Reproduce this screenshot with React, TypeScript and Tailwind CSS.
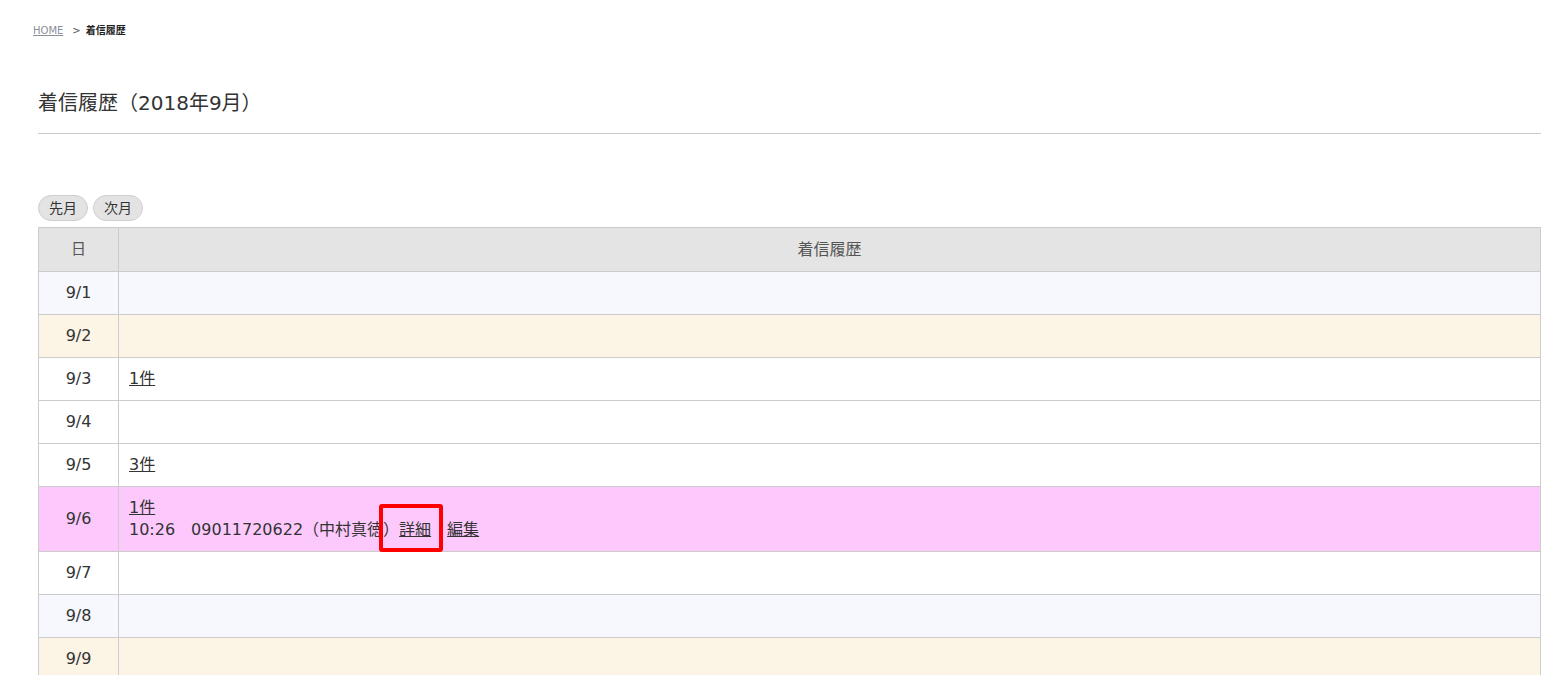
import React from "react";

type Row = {
  day: string;
  bg: string;
  content?: React.ReactNode;
};

const Detail: React.FC = () => (
  <span className="relative inline-block">
    <a href="#" className="underline">詳細</a>
    <span className="pointer-events-none absolute left-[-20px] right-[-12px] top-[-15px] bottom-[-11px] rounded-[3px] border-[4px] border-[#ff0000]" />
  </span>
);

const rows: Row[] = [
  { day: "9/1", bg: "bg-[#f7f8fd]" },
  { day: "9/2", bg: "bg-[#fcf4e4]" },
  { day: "9/3", bg: "bg-white", content: <a href="#" className="underline">1件</a> },
  { day: "9/4", bg: "bg-white" },
  { day: "9/5", bg: "bg-white", content: <a href="#" className="underline">3件</a> },
  {
    day: "9/6",
    bg: "bg-[#fdc9fd]",
    content: (
      <div className="leading-[22px]">
        <a href="#" className="underline">1件</a>
        <div>
          10:26　09011720622（中村真徳）<Detail />
          <a href="#" className="ml-4 underline">編集</a>
        </div>
      </div>
    ),
  },
  { day: "9/7", bg: "bg-white" },
  { day: "9/8", bg: "bg-[#f7f8fd]" },
  { day: "9/9", bg: "bg-[#fcf4e4]" },
];

const App: React.FC = () => {
  return (
    <div className="min-h-screen bg-white text-[#333] font-['DejaVu_Sans','Noto_Sans_CJK_JP',sans-serif]">
      <nav className="pl-[33px] pt-[23px] text-[10px] leading-[16px]">
        <a href="#" className="text-[#8a8f9a] underline">HOME</a>
        <span className="ml-[9px] mr-[5px] text-[#555]">&gt;</span>
        <span className="font-bold text-[#222]">着信履歴</span>
      </nav>

      <div className="ml-[38px] mr-[17px]">
        <h1 className="mt-[51px] pb-[17px] text-[20px] leading-[26px] border-b border-[#cccccc]">
          着信履歴（2018年9月）
        </h1>

        <div className="mt-[61px] flex gap-[5px]">
          <button className="h-[26px] rounded-full border border-[#cfcfcf] bg-[#e3e3e3] px-[10px] text-[14px] leading-[24px] text-[#333]">
            先月
          </button>
          <button className="h-[26px] rounded-full border border-[#cfcfcf] bg-[#e3e3e3] px-[10px] text-[14px] leading-[24px] text-[#333]">
            次月
          </button>
        </div>

        <table className="mt-[6px] w-full border-collapse text-[16px]">
          <thead>
            <tr className="h-[44px] bg-[#e4e4e4]">
              <th className="w-[80px] border border-[#cccccc] text-[15px] font-normal text-[#555]">日</th>
              <th className="border border-[#cccccc] text-[16px] font-normal text-[#555]">着信履歴</th>
            </tr>
          </thead>
          <tbody>
            {rows.map((r) => (
              <tr key={r.day} className={`${r.bg} ${r.day === "9/6" ? "h-[65px]" : "h-[43px]"}`}>
                <td className="border border-[#cccccc] text-center">{r.day}</td>
                <td className="border border-[#cccccc] px-[10px]">{r.content}</td>
              </tr>
            ))}
          </tbody>
        </table>
      </div>
    </div>
  );
};

export default App;
